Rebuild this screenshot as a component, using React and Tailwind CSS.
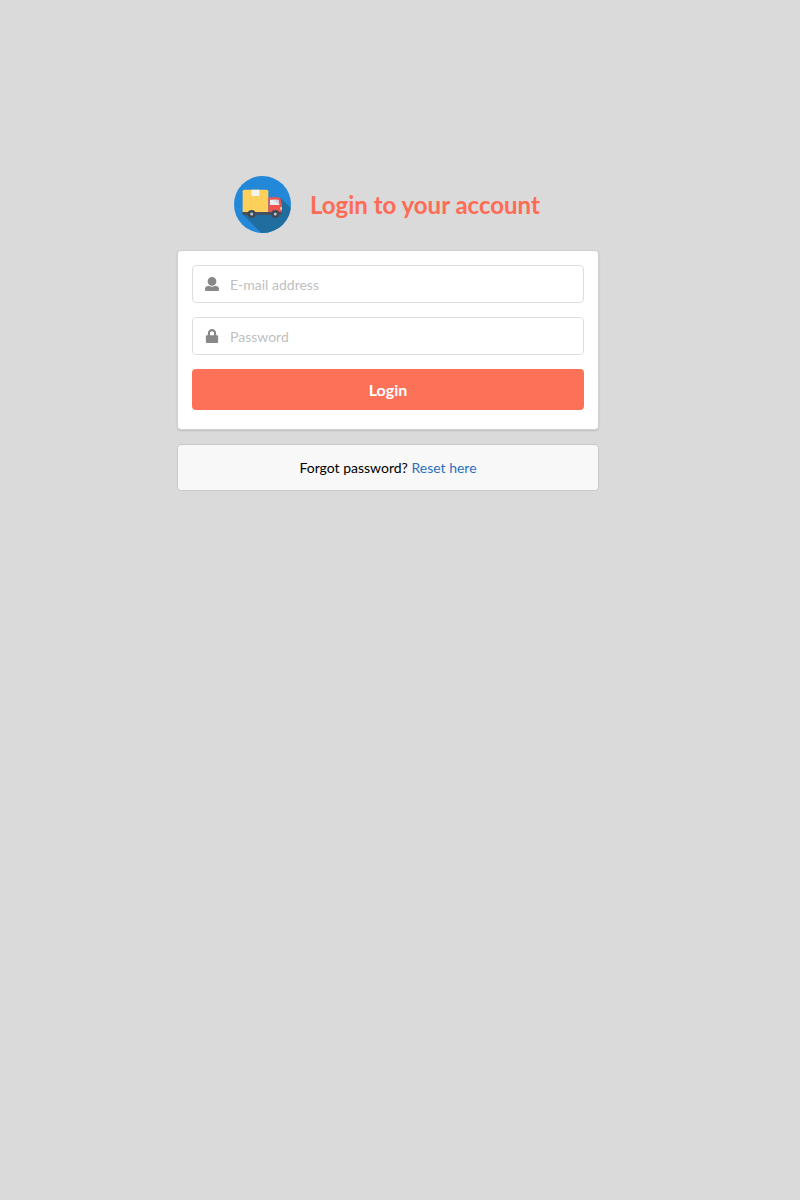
function TruckLogo() {
  return (
    <svg className="h-[57px] w-[57px] shrink-0" viewBox="24 18 171 171" aria-hidden="true">
      <defs>
        <clipPath id="disc">
          <circle cx="109.5" cy="103.5" r="85.5" />
        </clipPath>
      </defs>
      <circle cx="109.5" cy="103.5" r="85.5" fill="#2488d8" />
      <path clipPath="url(#disc)" d="M50 133L110 193H200V119L164 84L128 110V126Z" fill="#206e9f" />
      <path d="M55 59H122Q127 59 127 64V127H50V64Q50 59 55 59Z" fill="#fdd05c" />
      <path d="M76 59H100V76Q100 78 98 78H78Q76 78 76 76Z" fill="#f5f3ea" />
      <path d="M127 82H156Q162 82 164 88L168 107V127H127Z" fill="#ef5350" />
      <path d="M132 89H153Q157 89 158 93L160 105H132Z" fill="#e8edf2" />
      <path d="M140 89H153Q157 89 158 93L160 105Z" fill="#cfd8e3" />
      <path d="M162 112H168V119H162Z" fill="#f8c9a0" />
      <path d="M49 126H168V131Q168 135 164 135H53Q49 135 49 131Z" fill="#47505f" />
      <circle cx="77" cy="132" r="12" fill="#3f4755" />
      <circle cx="77" cy="132" r="4.5" fill="#bac5d0" />
      <circle cx="148" cy="132" r="12" fill="#3f4755" />
      <circle cx="148" cy="132" r="4.5" fill="#bac5d0" />
    </svg>
  );
}

function UserIcon() {
  return (
    <svg className="h-[14px] w-[14px]" viewBox="0 0 512 512" fill="currentColor" aria-hidden="true">
      <path d="M256 0c88.366 0 160 71.634 160 160s-71.634 160-160 160S96 248.366 96 160 167.634 0 256 0zm183.283 333.821l-71.313-17.828c-74.923 53.89-165.738 41.864-223.94 0l-71.313 17.828C29.981 344.505 0 382.903 0 426.955V464c0 26.51 21.49 48 48 48h416c26.51 0 48-21.49 48-48v-37.045c0-44.052-29.981-82.45-72.717-93.134z" />
    </svg>
  );
}

function LockIcon() {
  return (
    <svg className="h-[14px] w-[14px]" viewBox="-32 0 512 512" fill="currentColor" aria-hidden="true">
      <path d="M400 224h-24v-72C376 68.2 307.8 0 224 0S72 68.2 72 152v72H48c-26.5 0-48 21.5-48 48v192c0 26.5 21.5 48 48 48h352c26.5 0 48-21.5 48-48V272c0-26.5-21.5-48-48-48zm-104 0H152v-72c0-39.7 32.3-72 72-72s72 32.3 72 72v72z" />
    </svg>
  );
}

function Field({ icon, type, placeholder }) {
  return (
    <label className="mb-[14px] flex h-[38px] items-center rounded-[4px] border border-[#dededf] bg-white pl-[12px] text-[#888888]">
      {icon}
      <input
        type={type}
        placeholder={placeholder}
        className="ml-[11px] min-w-0 flex-1 bg-transparent text-[14px] leading-[17px] outline-none placeholder:text-[#bfbfbf]"
      />
    </label>
  );
}

export default function App() {
  return (
    <div className="min-h-screen bg-[#dadada] pt-[176px] pl-[177px] font-['Lato',sans-serif] text-[14px] text-black">
      <main className="w-[422px]">
        <h2 className="flex h-[57px] items-center pl-[57px] text-[24px] leading-[31px] font-bold text-[#ff6b54]">
          <TruckLogo />
          <span className="ml-[19px] whitespace-nowrap">Login to your account</span>
        </h2>
        <form
          className="mt-[17px] h-[180px] rounded-[4px] border border-[#d0d0d1] bg-white p-[14px] shadow-[0_1px_2px_0_rgba(34,36,38,0.15)]"
          onSubmit={(e) => e.preventDefault()}
        >
          <Field icon={<UserIcon />} type="text" placeholder="E-mail address" />
          <Field icon={<LockIcon />} type="password" placeholder="Password" />
          <button className="h-[41px] w-full rounded-[4px] bg-[#fd7158] text-[16px] leading-4 font-bold text-white">
            Login
          </button>
        </form>
        <div className="mt-[14px] flex h-[47px] items-center justify-center rounded-[4px] border border-[#c9c9ca] bg-[#f8f8f9]">
          <p className="whitespace-nowrap">
            Forgot password? <a className="text-[#2b70bd]" href="#reset">Reset here</a>
          </p>
        </div>
      </main>
    </div>
  );
}
